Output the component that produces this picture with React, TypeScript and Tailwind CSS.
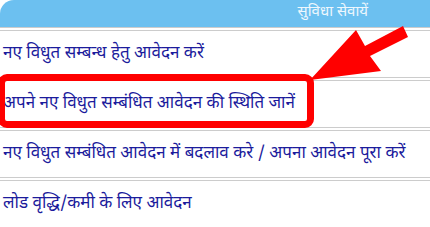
const ROWS = [
  'नए विधुत सम्बन्ध हेतु आवेदन करें',
  'अपने नए विधुत सम्बंधित आवेदन की स्थिति जानें',
  'नए विधुत सम्बंधित आवेदन में बदलाव करे / अपना आवेदन पूरा करें',
  'लोड वृद्धि/कमी के लिए आवेदन',
]

const FONT = "font-['Noto_Sans_Devanagari','Lohit_Devanagari','Mangal','Noto_Sans',sans-serif]"

function Sep() {
  return <div className="h-[4px] border-y border-[#cccccc]" />
}

export default function App() {
  return (
    <div className={`relative w-[430px] h-[227px] overflow-hidden bg-white ${FONT}`}>
      {/* Header */}
      <div className="h-[27px] bg-[#6cc0f0] rounded-tl-[14px] flex items-center justify-end pr-[62px]">
        <span className="text-[15px] text-[#eef7fd]">सुविधा सेवायें</span>
      </div>
      <Sep />

      {ROWS.map(r => (
        <div key={r}>
          <div className="h-[46px] flex items-center px-[3px] pt-[1px]">
            <span className="text-[17px] text-[#1b1b9c] whitespace-nowrap">{r}</span>
          </div>
          <Sep />
        </div>
      ))}

      {/* Red highlight box */}
      <div className="absolute left-[-2px] top-[74px] w-[316px] h-[54px] border-[7px] border-[#ff0000] rounded-[9px]" />

      {/* Arrow */}
      <svg className="absolute left-0 top-0" width="430" height="227" viewBox="0 0 430 227">
        <polygon
          fill="#ff0000"
          points="310,80 356,30 365,46 403,26 408,37 370,56 381,71"
        />
      </svg>
    </div>
  )
}
